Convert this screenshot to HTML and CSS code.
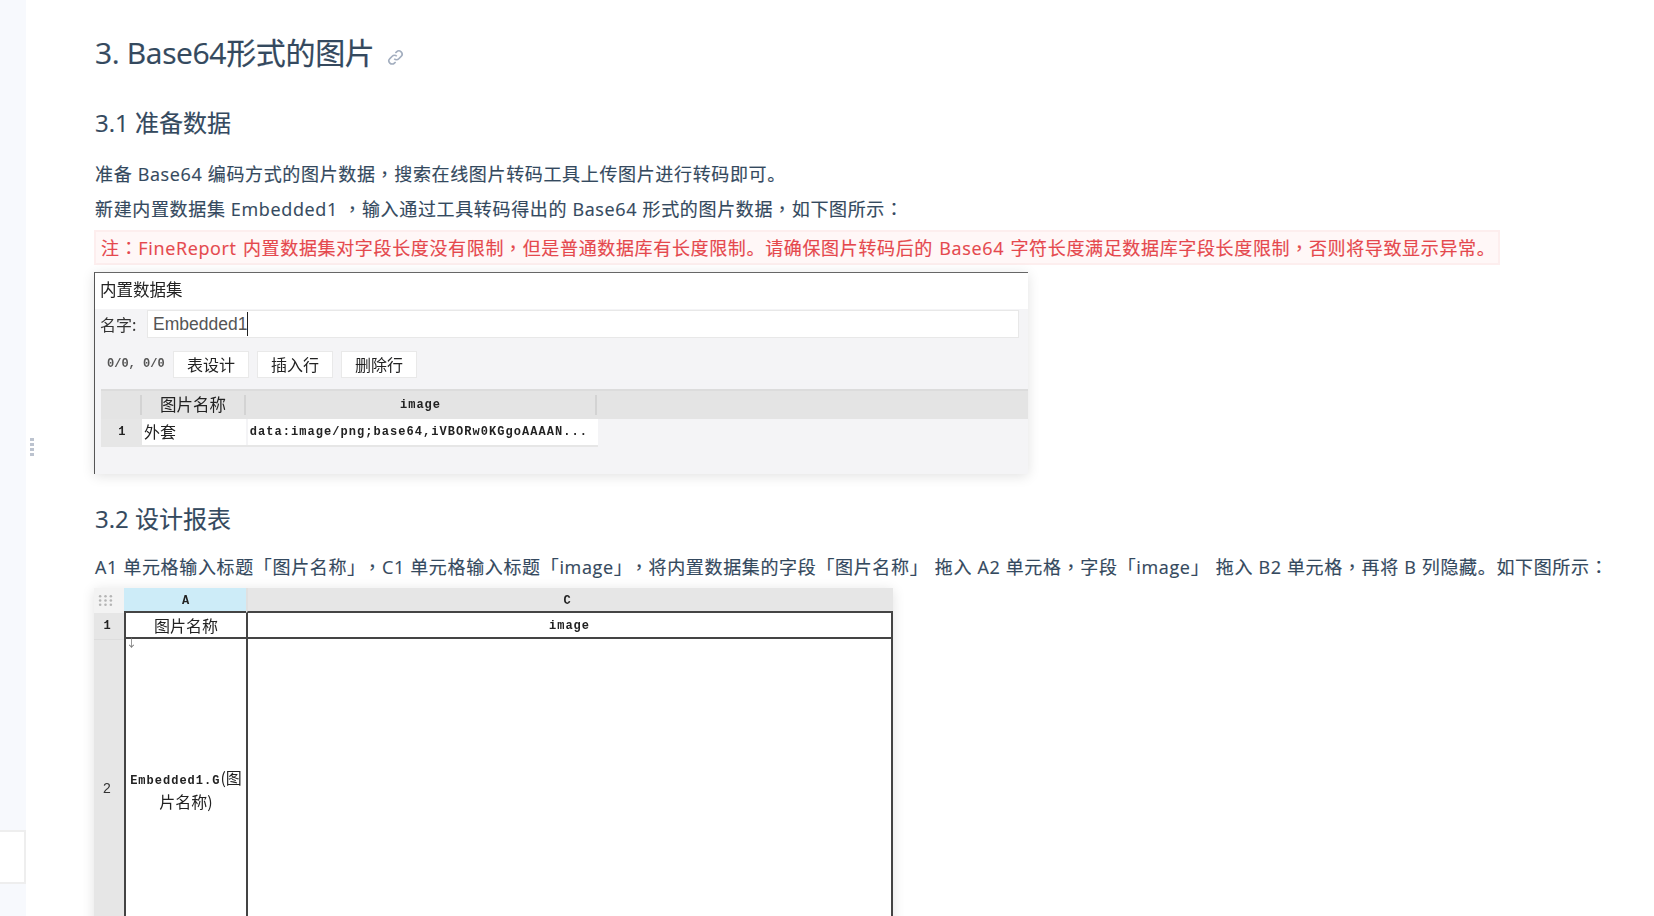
FILE: index.html
```html
<!DOCTYPE html>
<html lang="zh">
<head>
<meta charset="utf-8">
<title>Base64形式的图片</title>
<link rel="stylesheet" href="styles.css">
</head>
<body>
<div class="page">
  <aside class="side"><div class="side-box"></div></aside>
  <div class="handle"><i></i><i></i><i></i><i></i></div>
  <main class="main">
    <h2 class="h2">3. Base64形式的图片<svg class="link" viewBox="0 0 16 16" fill="none" stroke="#a3aebf" stroke-width="1.5"><path d="M6.8 9.2a3 3 0 0 0 4.3 0l2.2-2.2a3 3 0 0 0-4.3-4.3L7.9 3.8"/><path d="M9.2 6.8a3 3 0 0 0-4.3 0L2.7 9a3 3 0 0 0 4.3 4.3l1.1-1.1"/></svg></h2>
    <h3 class="h3 first">3.1 准备数据</h3>
    <p class="p">准备 Base64 编码方式的图片数据<span class="pc" lang="zh-Hant">，</span>搜索在线图片转码工具上传图片进行转码即可。</p>
    <p class="p">新建内置数据集 Embedded1 <span class="pc" lang="zh-Hant">，</span>输入通过工具转码得出的 Base64 形式的图片数据<span class="pc" lang="zh-Hant">，</span>如下图所示<span class="pc" lang="zh-Hant">：</span></p>
    <p class="note">注<span class="pc" lang="zh-Hant">：</span>FineReport 内置数据集对字段长度没有限制<span class="pc" lang="zh-Hant">，</span>但是普通数据库有长度限制。请确保图片转码后的 Base64 字符长度满足数据库字段长度限制<span class="pc" lang="zh-Hant">，</span>否则将导致显示异常。</p>
    <div class="shot ds">
      <div class="ds-title">内置数据集</div>
      <div class="ds-name"><span class="ds-label">名字:</span><div class="ds-input">Embedded1</div></div>
      <div class="ds-tools"><span class="ds-count">0/0, 0/0</span><span class="btn">表设计</span><span class="btn">插入行</span><span class="btn">删除行</span></div>
      <div class="ds-head"><span class="dh0"></span><span class="dh1">图片名称</span><span class="dh2 mono">image</span></div>
      <div class="ds-row"><span class="dr0 mono">1</span><span class="dr1">外套</span><span class="dr2 mono">data:image/png;base64,iVBORw0KGgoAAAAN...</span></div>
    </div>
    <h3 class="h3 second">3.2 设计报表</h3>
    <p class="p">A1 单元格输入标题<span class="q">「图片名称」</span><span class="pc" lang="zh-Hant">，</span>C1 单元格输入标题<span class="q">「image」</span><span class="pc" lang="zh-Hant">，</span>将内置数据集的字段<span class="q">「图片名称」</span>拖入 A2 单元格<span class="pc" lang="zh-Hant">，</span>字段<span class="q">「image」</span>拖入 B2 单元格<span class="pc" lang="zh-Hant">，</span>再将 B 列隐藏。如下图所示<span class="pc" lang="zh-Hant">：</span></p>
    <div class="shot sheet">
      <div class="sh-corner"><svg viewBox="0 0 14 12" width="15" height="13" fill="#b5b5b5"><circle cx="2" cy="2" r="1.2"/><circle cx="7" cy="2" r="1.2"/><circle cx="12" cy="2" r="1.2"/><circle cx="2" cy="6" r="1.2"/><circle cx="7" cy="6" r="1.2"/><circle cx="12" cy="6" r="1.2"/><circle cx="2" cy="10" r="1.2"/><circle cx="7" cy="10" r="1.2"/><circle cx="12" cy="10" r="1.2"/></svg></div>
      <div class="sh-a mono">A</div>
      <div class="sh-c mono"><span class="sh-c-label">C</span></div>
      <div class="sh-r1 mono">1</div>
      <div class="sh-a1">图片名称</div>
      <div class="sh-c1 mono">image</div>
      <div class="sh-r2">2</div>
      <div class="sh-a2"><span class="arrow">↓</span><span class="sh-a2-text"><span class="mono">Embedded1.G</span>(图<br>片名称)</span></div>
      <div class="sh-c2"></div>
    </div>
  </main>
</div>
</body>
</html>
```
FILE: styles.css
```css
* { box-sizing: border-box; }
html, body { margin: 0; height: 100%; }
body { background: #fff; overflow: hidden; font-family: "Open Sans", "Noto Sans CJK SC", sans-serif; color: #34495e; }
.page { display: flex; height: 916px; position: relative; overflow: hidden; }
.side { width: 26px; flex: none; background: #f7f9fd; position: relative; }
.side-box { position: absolute; left: 0; top: 830px; width: 26px; height: 54px; background: #fff; border: 2px solid #eeeeee; border-left: 0; }
.handle { position: absolute; left: 30px; top: 438px; display: grid; gap: 2px; }
.handle i { display: block; width: 4px; height: 3px; background: #bcc3cf; }
.main { flex: 1; min-width: 0; padding: 30px 0 0 68px; }
.h2 { margin: 0 0 0 1px; font-size: 30px; line-height: 46px; font-weight: 400; letter-spacing: -.35px; display: flex; align-items: center; -webkit-text-stroke: .2px; }
.link { width: 17px; height: 17px; margin: 8px 0 0 13px; }
.h3 { margin: 0 0 0 1px; font-size: 24px; line-height: 36px; font-weight: 400; -webkit-text-stroke: .15px; }
.h3.first { margin-top: 29px; }
.h3.second { margin-top: 27px; }
.p { margin: 0 0 0 1px; font-size: 18px; line-height: 35px; white-space: nowrap; letter-spacing: .65px; -webkit-text-stroke: .15px; }
.h3.first + .p { margin-top: 16px; }
.h3.second + .p { margin-top: 13px; }
.pc { font-family: "Noto Sans CJK TC", sans-serif; line-height: 0; }
.q { margin-right: 6.5px; line-height: 0; }
.note { margin: 3px 0 0; width: 1406px; height: 35px; font-size: 18px; line-height: 33px; padding-left: 5px; white-space: nowrap; letter-spacing: .65px; word-spacing: 1px; -webkit-text-stroke: .15px; color: #e5484d; background: #fff7f7; border: 2px solid #fdeeee; }
.shot { box-shadow: 0 2px 12px rgba(0,0,0,.12); color: #222; font-family: "Noto Sans CJK SC", sans-serif; filter: blur(.35px); }
.mono { font-family: "Liberation Mono", monospace; font-size: 12px; letter-spacing: 1px; font-weight: 700; }
.ds { margin-top: 7px; width: 934px; height: 202px; background: #f4f4f6; border-top: 1px solid #666; border-left: 1px solid #555; }
.ds-title { height: 36px; background: #fff; font-size: 16.5px; line-height: 32px; padding-left: 5px; }
.ds-name { height: 30px; display: flex; align-items: center; padding: 0 9px 0 5px; }
.ds-label { width: 47px; font-size: 16px; color: #333; }
.ds-input { flex: 1; height: 28px; background: #fff; border: 1px solid #e8e8e8; font-family: "Liberation Sans", sans-serif; font-size: 17.5px; line-height: 26px; padding-left: 5px; color: #555; position: relative; }
.ds-input::after { content: ""; display: inline-block; width: 1px; height: 24px; background: #222; vertical-align: -6px; }
.ds-tools { height: 50px; display: flex; align-items: center; gap: 8px; padding: 0 0 0 12px; }
.ds-count { width: 58px; font-family: "Liberation Mono", monospace; font-size: 12px; font-weight: 700; color: #555; }
.btn { width: 76px; height: 27px; background: #fff; border: 1px solid #e9e9e9; font-size: 16px; line-height: 25px; text-align: center; }
.ds-head { margin-left: 6px; height: 30px; background: #e4e4e4; border-top: 2px solid #dcdcdc; display: flex; align-items: center; font-size: 16.5px; }
.dh0 { width: 41px; height: 20px; border-right: 2px solid #d3d3d3; }
.dh1 { width: 104px; height: 20px; line-height: 18px; text-align: center; border-right: 2px solid #d3d3d3; }
.dh2 { width: 351px; height: 20px; line-height: 20px; text-align: center; border-right: 2px solid #d3d3d3; }
.ds-row { margin-left: 6px; height: 28px; display: flex; align-items: stretch; border-bottom: 2px solid #e6e6e6; width: 497px; }
.dr0 { width: 41px; background: #e6e6e6; text-align: center; line-height: 26px; padding-left: 2px; }
.dr1 { width: 104px; background: #fff; font-size: 16px; line-height: 24px; padding-left: 2px; }
.dr2 { width: 351px; background: #fff; margin-left: 2px; line-height: 26px; padding-left: 2px; white-space: nowrap; overflow: hidden; letter-spacing: 1.05px; }
.sheet { margin-top: 3px; width: 799px; height: 351px; display: grid; grid-template-columns: 30px 122px 1fr; grid-template-rows: 25px 26px 1fr; background: #fff; }
.sheet > div { display: flex; align-items: center; justify-content: center; }
.sheet > .sh-corner { background: #f3f3f3; justify-content: flex-start; padding-left: 4px; }
.sh-a { background: #cdecf8; border-bottom: 2px solid #444; padding: 2px 0 0 2px; }
.sh-c { background: #e6e6e6; border-bottom: 2px solid #444; border-left: 2px solid #e0e0e0; padding-top: 2px; }
.sh-c-label { margin-right: 6px; }
.sh-r1 { background: #e6e6e6; padding-right: 3px; }
.sh-a1 { font-size: 16px; border: 2px solid #444; border-width: 0 0 2px 2px; }
.sh-c1 { border: 2px solid #444; border-width: 0 2px 2px 2px; padding-top: 2px; }
.sh-r2 { background: #e6e6e6; border-top: 1px solid #ddd; font-family: "Liberation Sans", sans-serif; font-size: 14px; color: #333; padding: 0 4px 4px 0; }
.sh-a2 { position: relative; border-left: 2px solid #444; font-size: 16px; text-align: center; line-height: 20px; }
.arrow { position: absolute; left: 0; top: -3px; font-size: 11px; line-height: 12px; color: #777; }
.sh-c2 { border-left: 2px solid #444; border-right: 2px solid #444; }
```
